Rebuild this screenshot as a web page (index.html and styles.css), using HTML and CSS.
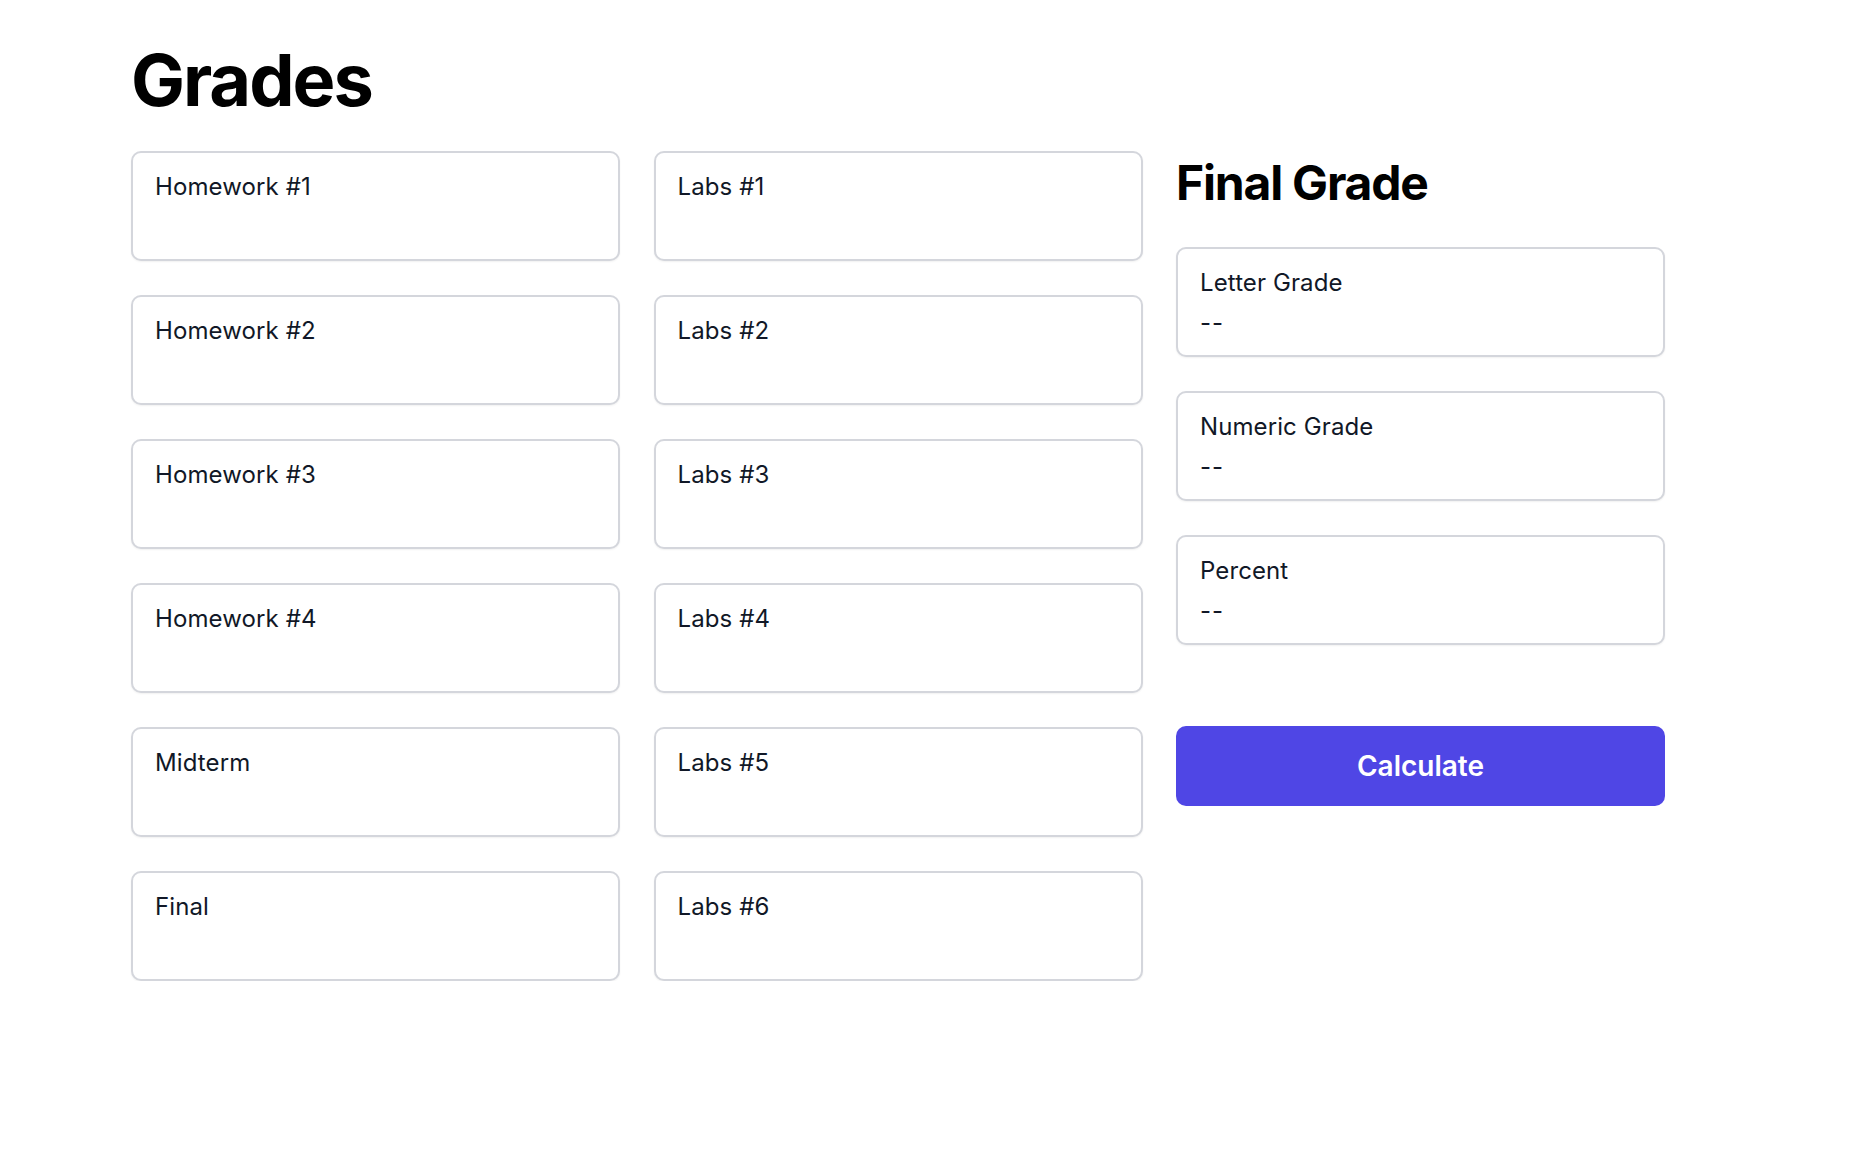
FILE: index.html
```html
<!DOCTYPE html>
<html lang="en">
<head>
<meta charset="utf-8">
<title>Grades</title>
<link rel="stylesheet" href="styles.css">
</head>
<body>
<main class="page">
  <h1 class="title">Grades</h1>
  <div class="layout">
    <div class="col">
      <label class="card"><span class="card-label">Homework #1</span><input class="card-input" type="text"></label>
      <label class="card"><span class="card-label">Homework #2</span><input class="card-input" type="text"></label>
      <label class="card"><span class="card-label">Homework #3</span><input class="card-input" type="text"></label>
      <label class="card"><span class="card-label">Homework #4</span><input class="card-input" type="text"></label>
      <label class="card"><span class="card-label">Midterm</span><input class="card-input" type="text"></label>
      <label class="card"><span class="card-label">Final</span><input class="card-input" type="text"></label>
    </div>
    <div class="col">
      <label class="card"><span class="card-label">Labs #1</span><input class="card-input" type="text"></label>
      <label class="card"><span class="card-label">Labs #2</span><input class="card-input" type="text"></label>
      <label class="card"><span class="card-label">Labs #3</span><input class="card-input" type="text"></label>
      <label class="card"><span class="card-label">Labs #4</span><input class="card-input" type="text"></label>
      <label class="card"><span class="card-label">Labs #5</span><input class="card-input" type="text"></label>
      <label class="card"><span class="card-label">Labs #6</span><input class="card-input" type="text"></label>
    </div>
    <aside class="col summary">
      <h2 class="summary-title">Final Grade</h2>
      <div class="card"><span class="card-label">Letter Grade</span><span class="card-value">--</span></div>
      <div class="card"><span class="card-label">Numeric Grade</span><span class="card-value">--</span></div>
      <div class="card"><span class="card-label">Percent</span><span class="card-value">--</span></div>
      <button class="calc-btn" type="button">Calculate</button>
    </aside>
  </div>
</main>
</body>
</html>
```
FILE: styles.css
```css
* {
  box-sizing: border-box;
}

html, body {
  margin: 0;
  padding: 0;
  background: #ffffff;
}

body {
  font-family: Inter, "Noto Sans", "Liberation Sans", sans-serif;
  color: #111827;
}

.page {
  padding: 44px 0 0 131px;
}

.title {
  margin: 0 0 35px;
  font-size: 72px;
  line-height: 72px;
  font-weight: 700;
  color: #000000;
  letter-spacing: -2px;
}

.layout {
  display: grid;
  grid-template-columns: 489px 489px 489px;
  column-gap: 33.5px;
  align-items: start;
}

.col {
  display: flex;
  flex-direction: column;
  gap: 34px;
}

.summary {
  gap: 0;
}

.card {
  display: flex;
  flex-direction: column;
  height: 110px;
  padding: 18px 22px 16px;
  border: 2px solid #d4d6dc;
  border-radius: 10px;
  background: #ffffff;
  box-shadow: 0 1px 2px rgba(0, 0, 0, 0.06);
}

.card-label {
  display: block;
  font-size: 24px;
  line-height: 32px;
  color: #111827;
  letter-spacing: 0.1px;
}

.card-input {
  border: none;
  outline: none;
  background: transparent;
  padding: 0;
  margin: 8px 0 0;
  font: inherit;
  font-size: 24px;
  line-height: 32px;
  height: 32px;
  color: #111827;
}

.card-value {
  display: block;
  margin-top: 8px;
  font-size: 24px;
  line-height: 32px;
  color: #111827;
  letter-spacing: 1px;
}

.summary .card + .card {
  margin-top: 34px;
}

.summary-title {
  margin: 8px 0 40px;
  font-size: 48px;
  line-height: 48px;
  font-weight: 700;
  color: #000000;
  letter-spacing: -1.2px;
}

.calc-btn {
  margin-top: 81px;
  height: 80px;
  width: 100%;
  border: none;
  border-radius: 10px;
  background: #4f46e5;
  color: #ffffff;
  font-family: inherit;
  font-size: 28px;
  font-weight: 600;
  cursor: pointer;
}
```
